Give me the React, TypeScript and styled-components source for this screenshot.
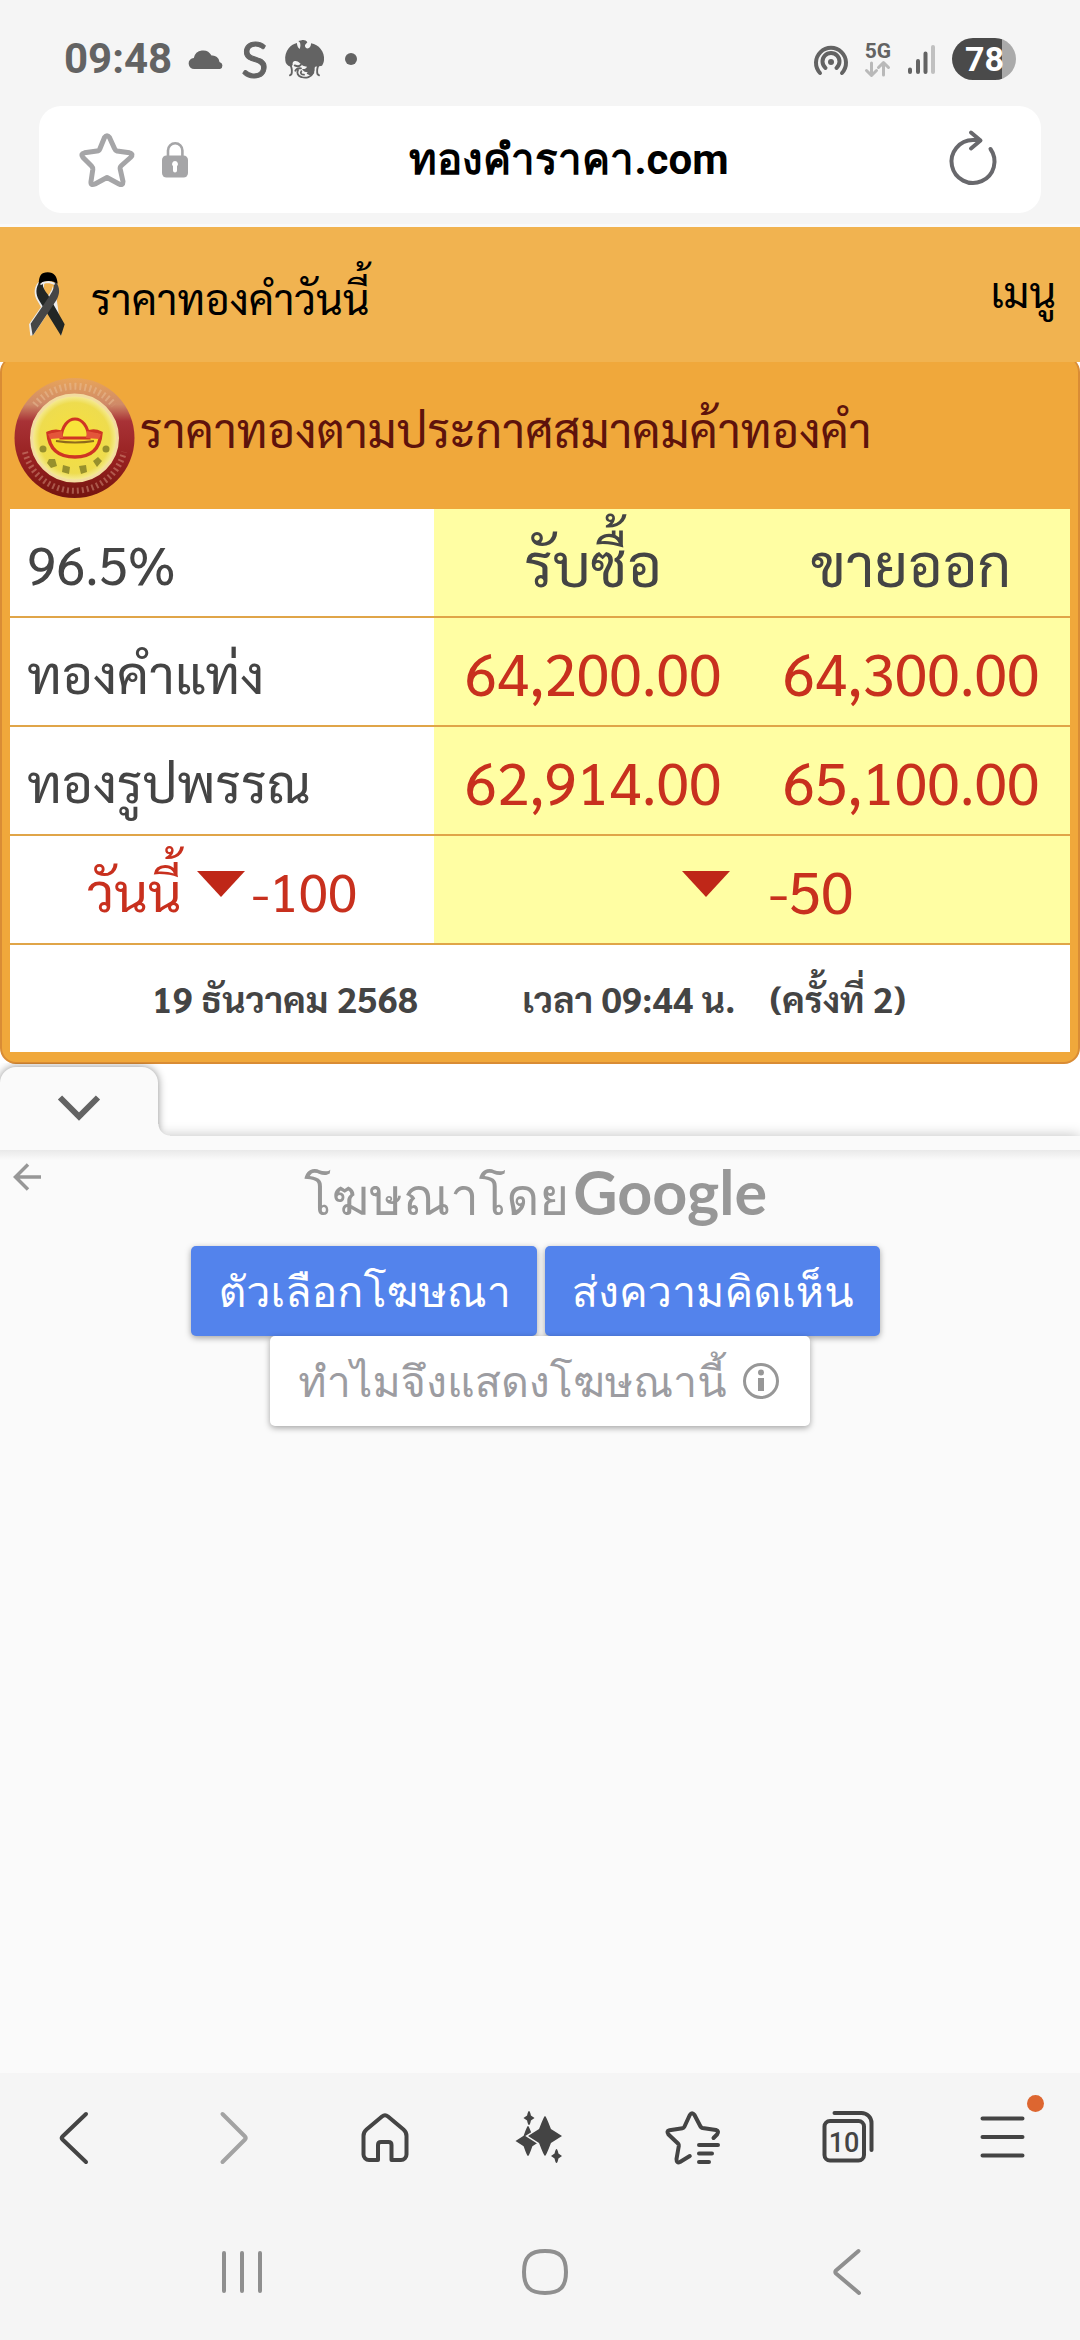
import React from "react";
import styled, { createGlobalStyle } from "styled-components";

const ui = `Roboto, "Noto Sans", sans-serif`;
const thai = `Sarabun, "Noto Sans Thai Looped", "Noto Sans", sans-serif`;
const adFont = `"Noto Sans", Loma, sans-serif`;

const Global = createGlobalStyle`
  *, *::before, *::after { box-sizing: border-box; }
  body { margin: 0; background: #fff; font-family: ${thai}; }
  button { border: 0; padding: 0; background: none; font: inherit; color: inherit; cursor: pointer; }
  svg { display: block; flex: none; overflow: visible; }
`;

const Screen = styled.div`
  display: flex;
  flex-direction: column;
  min-height: 100vh;
  overflow-x: hidden;
`;

/* ---------- system status + address bar ---------- */
const TopChrome = styled.header`
  background: #f5f5f5;
  padding: 12px 39px 11px;
`;
const StatusBar = styled.div`
  display: flex;
  justify-content: space-between;
  height: 94px;
  padding: 0 25px;
  color: #636363;
  font-family: ${ui};
`;
const StatusGroup = styled.div<{ $gap: number }>`
  display: flex;
  align-items: center;
  gap: ${(p) => p.$gap}px;
`;
const Clock = styled.time`
  font-size: 42px;
  font-weight: 700;
  line-height: 48px;
`;
const LetterBadge = styled.span`
  font-family: Lato, sans-serif;
  font-size: 50px;
  line-height: 48px;
  -webkit-text-stroke: 1px currentColor;
`;
const Dot = styled.span`
  width: 12px;
  height: 12px;
  margin-left: 4px;
  border-radius: 50%;
  background: #636363;
`;
const Network = styled.span`
  display: flex;
  flex-direction: column;
  align-items: center;
  font-size: 21px;
  font-weight: 700;
  line-height: 20px;
`;
const Battery = styled.span`
  width: 64px;
  height: 42px;
  padding-left: 13px;
  border-radius: 21px;
  background: linear-gradient(90deg, #4a4a4a 78%, #aaa 78%);
  color: #fff;
  font-size: 34px;
  font-weight: 700;
  line-height: 42px;
`;
const AddressBar = styled.form`
  display: flex;
  align-items: center;
  gap: 28px;
  height: 107px;
  padding: 0 43px 0 41px;
  border-radius: 22px;
  background: #fff;
`;
const BookmarkButton = styled.button`
  && { color: #a5a5a7; }
`;
const Address = styled.input`
  flex: 1;
  min-width: 0;
  border: 0;
  padding: 0;
  background: none;
  color: #000;
  font: 700 42px/60px ${ui};
  text-align: center;
  outline: 0;
`;

/* ---------- site ---------- */
const SiteBar = styled.nav`
  position: relative;
  z-index: 1;
  display: flex;
  align-items: center;
  justify-content: space-between;
  height: 138px;
  padding: 6px 24px 0 29px;
  border-top: 3px solid #fafafa;
  background: #f1b350;
  color: #000;
`;
const Brand = styled.a`
  display: flex;
  align-items: center;
  gap: 26px;
  color: inherit;
  font-size: 42px;
  line-height: 60px;
  text-decoration: none;
  svg { margin-top: 12px; }
`;
const MenuButton = styled.button`
  && { font-size: 42px; line-height: 60px; padding-bottom: 14px; }
`;
const Card = styled.section`
  margin-top: -6px;
  padding: 6px 8px 10px;
  border: 2px solid #d98c35;
  border-top-width: 1px;
  border-radius: 16px;
  background: #f0a83b;
`;
const CardHead = styled.div`
  display: flex;
  align-items: center;
  height: 146px;
`;
const CardTitle = styled.h1`
  margin: 0;
  padding-bottom: 14px;
  color: #5e130c;
  font-size: 47px;
  font-weight: 400;
  line-height: 60px;
`;
const Prices = styled.table`
  width: 100%;
  border-collapse: separate;
  border-spacing: 0;
  table-layout: fixed;
  background: #fff;
  color: #444;
`;
const Row = styled.tr`
  & > * { border-bottom: 2px solid #e0a548; }
  &:last-child > * { border-bottom: 0; }
`;
const Name = styled.th<{ $center?: boolean }>`
  width: 40%;
  height: 109px;
  padding: 0 17px;
  font-size: 53px;
  font-weight: 400;
  line-height: 80px;
  text-align: ${(p) => (p.$center ? "center" : "left")};
  color: ${(p) => (p.$center ? "#c8301e" : "#444")};
`;
const ColHead = styled.th`
  padding: 0;
  background: #fffea3;
  font-size: 59px;
  font-weight: 400;
  line-height: 80px;
`;
const Price = styled.td`
  padding: 0;
  background: #fffea3;
  color: #c8301e;
  font-size: 59px;
  line-height: 80px;
  text-align: center;
`;
const Change = styled.div<{ $wide?: boolean }>`
  display: flex;
  align-items: center;
  justify-content: center;
  gap: ${(p) => (p.$wide ? 32 : 0)}px;
  padding-left: ${(p) => (p.$wide ? 16 : 0)}px;
`;
const Down = styled.span`
  margin: 0 7px 12px 15px;
  border: solid transparent;
  border-width: 26px 24px 0;
  border-top-color: #bf2718;
`;
const Stamp = styled.td`
  height: 107px;
  padding: 0 22px 2px 0;
  font-size: 36px;
  font-weight: 700;
  line-height: 60px;
`;
const StampLine = styled.div`
  display: flex;
  justify-content: center;
  gap: 34px;
  time:first-child { margin-right: 70px; }
`;

/* ---------- anchored ad ---------- */
const AdTop = styled.div`
  position: relative;
  height: 86px;
  padding-top: 3px;
`;
const AdStrip = styled.div`
  height: 14px;
  background: #fafafa;
  box-shadow: 0 0 14px rgba(0, 0, 0, 0.26);
`;
const AdToggle = styled.button`
  && {
    position: relative;
    z-index: 1;
    display: flex;
    align-items: center;
    justify-content: center;
    width: 158px;
    height: 69px;
    padding-top: 13px;
    border-radius: 16px 16px 0 0;
    background: #fafafa;
    box-shadow: 0 0 8px rgba(0, 0, 0, 0.45);
    clip-path: inset(-4px -14px 0 0);
  }
  &::after {
    content: "";
    position: absolute;
    left: 100%;
    bottom: 0;
    width: 12px;
    height: 12px;
    background: radial-gradient(circle at 100% 0, transparent 11px, #fafafa 12px);
  }
`;
const AdPanel = styled.aside`
  position: relative;
  z-index: 1;
  flex: 1;
  display: flex;
  flex-direction: column;
  align-items: center;
  background: linear-gradient(#e9e9e9, #fafafa 10px);
  font-family: ${adFont};
`;
const AdBack = styled.button`
  && { position: absolute; left: 13px; top: 13px; }
`;
const AdBy = styled.p`
  display: flex;
  align-items: baseline;
  height: 96px;
  margin: 0;
  padding: 12px 9px 0 0;
  color: #979797;
  font-size: 51px;
  line-height: 60px;
`;
const Wordmark = styled.span`
  margin-left: 4px;
  font-family: Lato, sans-serif;
  font-size: 61px;
  font-weight: 700;
`;
const AdActions = styled.div`
  display: flex;
  gap: 8px;
  padding-right: 9px;
`;
const AdButton = styled.button<{ $plain?: boolean }>`
  && {
    display: flex;
    align-items: center;
    gap: 16px;
    height: 90px;
    padding: 0 ${(p) => (p.$plain ? 31 : 26)}px 0 ${(p) => (p.$plain ? 28 : 27)}px;
    border-radius: 5px;
    background: ${(p) => (p.$plain ? "#fff" : "#5383ec")};
    color: ${(p) => (p.$plain ? "#9c9ca1" : "#fff")};
    box-shadow: 0 2px 6px rgba(0, 0, 0, 0.35);
    font-size: 43px;
    line-height: 60px;
    white-space: nowrap;
  }
`;

/* ---------- browser toolbar + system navigation ---------- */
const Toolbar = styled.nav`
  display: grid;
  grid-template-columns: repeat(7, 1fr);
  height: 130px;
  background: #f5f5f5;
  color: #444;
`;
const Tool = styled.button<{ $dim?: boolean }>`
  && {
    display: flex;
    align-items: center;
    justify-content: center;
    color: ${(p) => (p.$dim ? "#a3a3a3" : "#444")};
  }
`;
const ToolIcon = styled.span`
  position: relative;
`;
const Notice = styled.span`
  position: absolute;
  top: -13px;
  right: -11px;
  width: 17px;
  height: 17px;
  border-radius: 50%;
  background: #dd6630;
`;
const SystemNav = styled.nav`
  display: flex;
  justify-content: space-between;
  height: 137px;
  padding: 0 203px 0 212px;
  background: #f5f5f5;
  color: #8f8f8f;
`;
const NavKey = styled.button`
  && { width: 60px; display: flex; align-items: center; justify-content: center; }
`;

type LineProps = { w: number; h: number; sw?: number; children: React.ReactNode };
const Line = ({ w, h, sw = 4, children }: LineProps) => (
  <svg width={w} height={h} viewBox={`0 0 ${w} ${h}`} fill="none" stroke="currentColor" strokeWidth={sw} strokeLinecap="round" strokeLinejoin="round" aria-hidden="true">
    {children}
  </svg>
);

const Cloud = () => (
  <svg width="35" height="20" viewBox="0 0 35 20" fill="currentColor" aria-hidden="true">
    <path d="M5.500 20a5.500 5.500 0 0 1-.7-11A9.500 9.500 0 0 1 22.500 6.600a7 7 0 0 1 8 6.300A3.700 3.700 0 0 1 31 20Z" />
  </svg>
);

const Garuda = () => (
  <svg width="39" height="39" viewBox="0 0 117 117" aria-hidden="true">
    <path
      fill="currentColor"
      d="M40 3l10-2c6-2 14 0 17 6l-7 8c-1 7 4 11 10 10 6-2 8-8 8-15 12 2 22 8 29 17 8 10 11 20 10 34-1 7-3 12-6 16L96 80c-3-1-6 0-7 3 1 12-3 20-12 24l-12-6 3-4c-8 0-14-4-17-10 8 1 13-2 15-7-9 0-16-4-21-10-6-6-10-8-16-7-5 1-7 6-6 12L17 80C6 76 2 70 1 62-1 48 3 35 11 25 18 16 27 11 36 9c0 7 2 14 8 18 3-8 3-15 0-20Z"
    />
    <g fill="none" stroke="currentColor" strokeWidth="5.500" strokeLinecap="round">
      <path d="M17 76c4 10 5 19 2 27l-4 3M100 76c-4 10-5 19-2 27l4 3" />
      <path d="M29 76c8 4 15 3 19-2M31 92c4-7 10-8 17-7" />
      <path d="M39 90c-5 9 0 18 10 21 15 5 30 0 36-13" />
      <path d="M49 94c-4 6 0 10 8 10" />
    </g>
  </svg>
);

const Hotspot = () => (
  <Line w={34} h={31} sw={4}>
    <path d="M6 29A15 15 0 1 1 28 29" />
    <path d="M11.500 24A8.500 8.500 0 1 1 22.500 24" />
    <circle cx="17" cy="18" r="3" fill="currentColor" stroke="none" />
  </Line>
);

const Star = () => (
  <Line w={54} h={54} sw={5}>
    <path d="M24.500 4.500Q27 1 29.500 4.500L34.500 15.500Q35.200 17.500 37 18L49.500 19.800Q54 21 50.500 24.500L41.500 32.500Q39.800 34 40.200 36L43 48.500Q43 53 39 51L27 44.500 15 51Q10.500 53 11 48.500L12.800 36.500Q13 34.500 11.500 33L3 24.500Q0 21 4.500 19.800L17 18Q19 17.800 19.800 16Z" />
  </Line>
);

const Lock = () => (
  <svg width="26" height="36" viewBox="0 0 26 36" aria-hidden="true">
    <path d="M6 15V8.500a7.200 7.200 0 0 1 14.400 0V15" fill="none" stroke="#a5a5a7" strokeWidth="2.600" />
    <rect y="13.500" width="26" height="22" rx="4.500" fill="#a5a5a7" />
    <path d="M13 19a3 3 0 0 1 2 5.200V28.500a2 2 0 0 1-4 0V24.200A3 3 0 0 1 13 19Z" fill="#fff" />
  </svg>
);

const Ribbon = () => (
  <svg width="36" height="64" viewBox="0 0 108 190" aria-hidden="true">
    <path d="M28 30C16 44 14 62 22 80l14 24L0 156l4 34 9-2 48-72 38 74L80 60 60 24Z" fill="#ececec" />
    <path d="M48 26C40 50 50 66 54 76 66 58 76 44 68 30Z" fill="#f1b350" />
    <path d="M34 26C18 46 20 66 30 84l66 106 11-34L56 66C46 52 40 42 42 34Z" fill="#222625" />
    <path d="M80 26c14 22 13 38 2 58L11 190 5 154 62 70C74 52 76 42 74 34Z" fill="#464646" />
    <path d="M29 36C30 10 36 0 56 0S84 12 86 34C72 24 46 22 29 36Z" fill="#000" />
    <path d="M33 35C46 24 68 24 78 33L76 38C64 31 48 31 36 38Z" fill="#ececec" />
  </svg>
);

const Emblem = () => (
  <svg width="130" height="135" viewBox="0 1 130 135" role="img" aria-label="Gold Traders Association">
    <defs>
      <linearGradient id="ring" x1="0" y1="0" x2="0" y2="1">
        <stop offset="0" stopColor="#e8a45a" />
        <stop offset="0.220" stopColor="#cf8a68" />
        <stop offset="0.360" stopColor="#a83236" />
        <stop offset="0.700" stopColor="#96201f" />
        <stop offset="1" stopColor="#74150f" />
      </linearGradient>
      <radialGradient id="face">
        <stop offset="0" stopColor="#f8e03c" />
        <stop offset="0.820" stopColor="#eedc4e" />
        <stop offset="1" stopColor="#f6eda0" />
      </radialGradient>
    </defs>
    <circle cx="64.500" cy="70" r="60" fill="url(#ring)" />
    <path d="M25 37A51 51 0 0 1 104 37" fill="none" stroke="#e9bf98" strokeOpacity="0.500" strokeWidth="7" strokeDasharray="2 3" />
    <path d="M15 84A51 51 0 0 0 114 84" fill="none" stroke="#dfa78d" strokeOpacity="0.450" strokeWidth="6" strokeDasharray="2 3" />
    <circle cx="64.500" cy="70" r="43" fill="url(#face)" stroke="#f3dca0" strokeWidth="3" />
    <path d="M38 65c9-4 14-1 17 1l19 0c5-3 11-4 17-1-1 14-8 24-26 24S39 80 38 65Z" fill="#f7dc2e" stroke="#cf3524" strokeWidth="3.500" />
    <path d="M51 70c1-12 7-19 14-19s13 7 14 19Z" fill="#f8e43a" stroke="#cf3524" strokeWidth="3" />
    <path d="M38 66l14-3 1 7-13 1ZM91 66l-14-3-1 7 13 1Z" fill="#e4553a" />
    <path d="M46 73q19 3 38 0" stroke="#8f6a1c" strokeWidth="2" fill="none" />
    <g fill="#97902c">
      <circle cx="33" cy="81" r="3.500" />
      <circle cx="96" cy="81" r="3.500" />
      <path d="M39 91l6 0 2 7-6 2-4-5ZM53 97l7 2-1 7-7-2ZM69 98l7-1 1 7-6 2ZM83 93l5-4 4 4-5 6Z" />
    </g>
  </svg>
);

const Spark = ({ x, y, w, h }: { x: number; y: number; w: number; h: number }) => (
  <path
    d={`M${x} ${y - h}Q${x + 1} ${y - h} ${x + w * 0.35} ${y - h * 0.35}L${x + w} ${y}L${x + w * 0.35} ${y + h * 0.35}Q${x + 1} ${y + h} ${x} ${y + h}Q${x - 1} ${y + h} ${x - w * 0.35} ${y + h * 0.35}L${x - w} ${y}L${x - w * 0.35} ${y - h * 0.35}Q${x - 1} ${y - h} ${x} ${y - h}Z`}
  />
);

const prices = [
  { name: "ทองคำแท่ง", buy: "64,200.00", sell: "64,300.00" },
  { name: "ทองรูปพรรณ", buy: "62,914.00", sell: "65,100.00" },
];

export default function App() {
  return (
    <Screen>
      <Global />
      <TopChrome>
        <StatusBar>
          <StatusGroup $gap={17}>
            <Clock>09:48</Clock>
            <Cloud />
            <LetterBadge>S</LetterBadge>
            <Garuda />
            <Dot />
          </StatusGroup>
          <StatusGroup $gap={17}>
            <Hotspot />
            <Network>
              5G
              <svg width="25" height="16" viewBox="0 0 25 16" fill="none" stroke="#b9b9b9" strokeWidth="3" strokeLinecap="round" strokeLinejoin="round" aria-hidden="true">
                <path d="M6.500 2v12M1.500 9.500l5 5 5-5M18.500 14V2M13.500 6.500l5-5 5 5" />
              </svg>
            </Network>
            <Line w={27} h={29} sw={4}>
              <path d="M2 24.500v2.500M10 16v11M17.500 8.500V27" />
              <path d="M25 2v25" stroke="#c0c0c0" />
            </Line>
            <Battery>78</Battery>
          </StatusGroup>
        </StatusBar>
        <AddressBar onSubmit={(e) => e.preventDefault()}>
          <BookmarkButton type="button" aria-label="Bookmark">
            <Star />
          </BookmarkButton>
          <Lock />
          <Address aria-label="Address" defaultValue="ทองคำราคา.com" />
          <button type="submit" aria-label="Reload">
            <svg width="48" height="56" viewBox="0 2 48 56" fill="none" stroke="#68686c" strokeWidth="4" strokeLinecap="round" strokeLinejoin="round" aria-hidden="true">
              <path d="M40.500 19A21.500 21.500 0 1 1 23 10H30M21 2.500L30.500 10.500 21 18.500" />
            </svg>
          </button>
        </AddressBar>
      </TopChrome>

      <SiteBar>
        <Brand href="#">
          <Ribbon />
          ราคาทองคำวันนี้
        </Brand>
        <MenuButton>เมนู</MenuButton>
      </SiteBar>

      <Card>
        <CardHead>
          <Emblem />
          <CardTitle>ราคาทองตามประกาศสมาคมค้าทองคำ</CardTitle>
        </CardHead>
        <Prices>
          <tbody>
            <Row>
              <Name scope="col">96.5%</Name>
              <ColHead scope="col">รับซื้อ</ColHead>
              <ColHead scope="col">ขายออก</ColHead>
            </Row>
            {prices.map((p) => (
              <Row key={p.name}>
                <Name scope="row">{p.name}</Name>
                <Price>{p.buy}</Price>
                <Price>{p.sell}</Price>
              </Row>
            ))}
            <Row>
              <Name scope="row" $center>
                <Change>
                  วันนี้ <Down /> -100
                </Change>
              </Name>
              <Price colSpan={2}>
                <Change $wide>
                  <Down /> -50
                </Change>
              </Price>
            </Row>
            <Row>
              <Stamp colSpan={3}>
                <StampLine>
                  <time>19 ธันวาคม 2568</time>
                  <time>เวลา 09:44 น.</time>
                  <span>(ครั้งที่ 2)</span>
                </StampLine>
              </Stamp>
            </Row>
          </tbody>
        </Prices>
      </Card>

      <AdTop>
        <AdToggle aria-label="Collapse ad">
          <svg width="42" height="26" viewBox="0 0 42 26" fill="none" stroke="#636363" strokeWidth="6" aria-hidden="true">
            <path d="M2 2.500L21 21.500 40 2.500" />
          </svg>
        </AdToggle>
        <AdStrip />
      </AdTop>
      <AdPanel>
        <AdBack aria-label="Back">
          <svg width="28" height="28" viewBox="0 0 28 28" fill="none" stroke="#979797" strokeWidth="3.500" aria-hidden="true">
            <path d="M28 14H3M15 1.500L2.500 14 15 26.500" />
          </svg>
        </AdBack>
        <AdBy>
          โฆษณาโดย<Wordmark>Google</Wordmark>
        </AdBy>
        <AdActions>
          <AdButton>ตัวเลือกโฆษณา</AdButton>
          <AdButton>ส่งความคิดเห็น</AdButton>
        </AdActions>
        <AdButton $plain>
          ทำไมจึงแสดงโฆษณานี้
          <svg width="36" height="36" viewBox="0 0 36 36" aria-hidden="true">
            <circle cx="18" cy="18" r="16.500" fill="none" stroke="#979797" strokeWidth="3" />
            <circle cx="18" cy="9.500" r="3" fill="#979797" />
            <path d="M15 15h6v13h-6Z" fill="#979797" />
          </svg>
        </AdButton>
      </AdPanel>

      <Toolbar>
        <Tool aria-label="Back">
          <Line w={60} h={60}><path d="M39 6L15.500 28.500Q14 30 15.500 31.500L39 54" /></Line>
        </Tool>
        <Tool aria-label="Forward" $dim>
          <Line w={60} h={60}><path d="M21.500 6L44 28.500Q45.500 30 44 31.500L21.500 54" /></Line>
        </Tool>
        <Tool aria-label="Home">
          <Line w={60} h={60}>
            <path d="M22 52H13a5.500 5.500 0 0 1-5.500-5.500V28q0-4 3-6.500L26 8.500q3-2.500 6 0L47.500 21.500q3 2.500 3 6.500V46.500a5.500 5.500 0 0 1-5.500 5.500H35.500V37q0-3-3-3H25q-3 0-3 3Z" />
          </Line>
        </Tool>
        <Tool aria-label="Assistant">
          <svg width="60" height="60" viewBox="0 0 60 60" fill="currentColor" aria-hidden="true">
            <Spark x={18} y={33} w={12.5} h={15} />
            <g stroke="#f5f5f5" strokeWidth="4"><Spark x={35} y={28} w={16} h={19} /></g>
            <Spark x={35} y={28} w={17} h={20} />
            <Spark x={19} y={10} w={5.5} h={7} />
            <Spark x={46.5} y={48} w={5.5} h={7} />
          </svg>
        </Tool>
        <Tool aria-label="Bookmarks">
          <Line w={60} h={60}>
            <path d="M49.500 30L53 26.500Q55.500 23 52 22L38.500 20Q37 19.500 36.500 18.500L30.500 7Q28 3.500 25.800 7L20.500 18.500Q19.800 20 18.500 20.200L5.500 22.200Q2 23 4.500 26.500L14 35.500Q15 36.500 14.800 38L12.500 51Q12.500 55.500 16 54L25.800 48" />
            <path d="M35 37H54M35 45.500H48M35 54H45" />
          </Line>
        </Tool>
        <Tool aria-label="Tabs">
          <Line w={60} h={60}>
            <rect x="5.500" y="13" width="39.500" height="39.500" rx="5.500" />
            <path d="M15.500 5H42.500a10 10 0 0 1 10 10V42" />
            <text x="25" y="44" textAnchor="middle" fill="currentColor" stroke="none" fontFamily="Roboto, sans-serif" fontSize="27" fontWeight="500">10</text>
          </Line>
        </Tool>
        <Tool aria-label="Menu">
          <ToolIcon>
            <Line w={60} h={60}><path d="M9.500 10.500H49.500M9.500 29H49.500M9.500 47.500H49.500" /></Line>
            <Notice />
          </ToolIcon>
        </Tool>
      </Toolbar>
      <SystemNav>
        <NavKey aria-label="Recent apps">
          <Line w={40} h={42}><path d="M2 2V40M20 2V40M38 2V40" /></Line>
        </NavKey>
        <NavKey aria-label="Home screen">
          <Line w={46} h={46}><path d="M23 2C38 2 44 8 44 23S38 44 23 44 2 38 2 23 8 2 23 2Z" /></Line>
        </NavKey>
        <NavKey aria-label="System back">
          <Line w={28} h={46}><path d="M25.500 2L3 21.500Q1.500 23 3 24.500L26 44" /></Line>
        </NavKey>
      </SystemNav>
    </Screen>
  );
}
